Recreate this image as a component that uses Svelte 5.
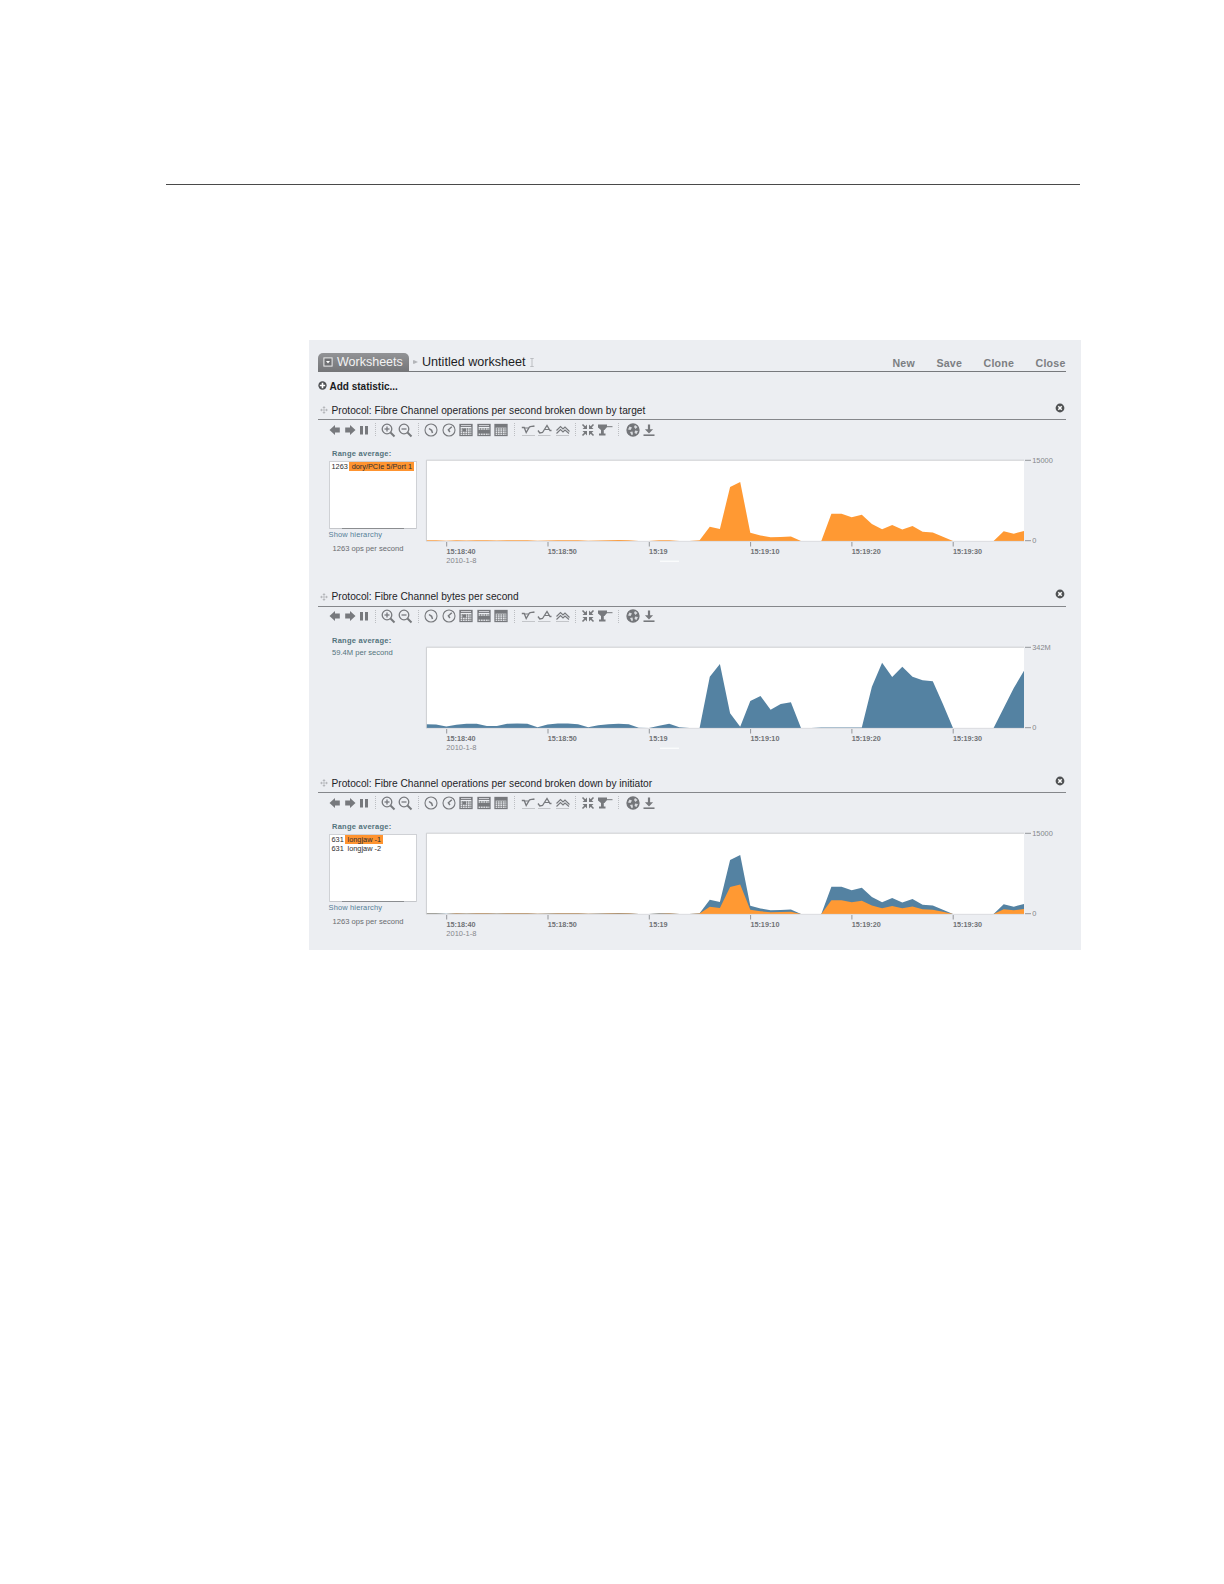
<script>
  const STEP = 10.135;
  const BASE = 81;

  const target = [
    0.7, 0.7, 0.2, 0.8, 0.6, 0.8, 0.8, 0.5, 0.8, 0.8, 0.8, 0.3, 0.6, 0.8, 0.8, 0.8, 0.3, 0.6, 0.8, 0.9,
    0.8, 0, 0, 0.7, 0.8, 0, 0, 0.8, 14.3, 12, 54, 59, 8.3, 5.5, 3.7, 4, 4.5, 0, 0, 0,
    27.3, 27.3, 23.7, 26.3, 17, 11.7, 16, 11.5, 15, 9.3, 8.5, 4.3, 0, 0, 0, 0, 0, 9.7, 7.3, 10
  ];
  const bytes = [
    3.7, 3.5, 1.6, 3.3, 4.2, 4.2, 2, 2, 4.2, 4.4, 4.2, 0.8, 3.5, 4.4, 4.4, 3.7, 0.8, 2.7, 3.7, 4.2,
    3.7, 0.3, 0, 2.3, 4.2, 0.8, 0, 0, 51.3, 64, 14.7, 1.3, 27, 32, 18.3, 24, 25.7, 0, 0, 0.4,
    0.5, 0.5, 0.5, 0.5, 41.3, 65.3, 51, 61.3, 51.3, 47.7, 46.7, 24, 0, 0, 0, 0, 0, 20, 40, 57.3
  ];
  const half = target.map((v) => v / 2);

  const blue = '#5482a2';
  const orange = '#ff9933';

  const stats = [
    {
      title: 'Protocol: Fibre Channel operations per second broken down by target',
      max: '15000',
      layers: [{ color: orange, data: target }],
      rows: [{ value: 1263, name: 'dory/PCIe 5/Port 1', selected: true }],
      total: '1263 ops per second',
      mark: true
    },
    {
      title: 'Protocol: Fibre Channel bytes per second',
      max: '342M',
      layers: [{ color: blue, data: bytes }],
      rows: null,
      total: '59.4M per second',
      mark: true
    },
    {
      title: 'Protocol: Fibre Channel operations per second broken down by initiator',
      max: '15000',
      layers: [{ color: blue, data: target }, { color: orange, data: half }],
      rows: [
        { value: 631, name: 'longjaw -1', selected: true },
        { value: 631, name: 'longjaw -2', selected: false }
      ],
      total: '1263 ops per second',
      mark: false
    }
  ];

  const ticks = ['15:18:40', '15:18:50', '15:19', '15:19:10', '15:19:20', '15:19:30'];
  const menu = ['New', 'Save', 'Clone', 'Close'];

  const groups = [
    { step: 14.4, gap: 8.4, icons: ['prev', 'next', 'pause'] },
    { step: 17, gap: 8.8, icons: ['zoomIn', 'zoomOut'] },
    { step: 17.45, gap: 9.1, icons: ['minute', 'hour', 'day', 'week', 'month'] },
    { step: 17.6, gap: 8.3, icons: ['min', 'max', 'lines'] },
    { step: 16.6, gap: 11.5, icons: ['drill', 'trophy'] },
    { step: 16, gap: 0, icons: ['sphere', 'download'] }
  ];

  function area(data) {
    const pts = data.map((v, i) => `${(i * STEP).toFixed(1)},${(BASE - v).toFixed(1)}`);
    return `0,${BASE} ${pts.join(' ')} 598,${BASE}`;
  }
</script>

{#snippet icon(name)}
  <svg class="icon" viewBox="0 0 14 14" width="14" height="14">
    {#if name === 'prev'}
      <path class="fill" d="M1.5 7 7 2v2.6h4.8v4.8H7V12z" />
    {:else if name === 'next'}
      <path class="fill" d="M12.5 7 7 2v2.6H2.2v4.8H7V12z" />
    {:else if name === 'pause'}
      <path class="fill" d="M3 3h3v8.4H3zM8 3h3v8.4H8z" />
    {:else if name === 'zoomIn' || name === 'zoomOut'}
      <circle cx="6" cy="6" r="4.8" />
      <path d="M3.5 6h5" />
      {#if name === 'zoomIn'}<path d="M6 3.5v5" />{/if}
      <path d="m9.5 9.5 4 4" stroke-width="2" />
    {:else if name === 'minute'}
      <circle cx="7" cy="7" r="6" stroke-width="1.1" />
      <path d="m5 5.5 2.6 1.8.9 2.7" stroke-width="1.5" />
    {:else if name === 'hour'}
      <circle cx="7" cy="7" r="6" stroke-width="1.1" />
      <path d="m9.8 3.8-3.4 3L7.9 9" stroke-width="1.5" />
    {:else if name === 'day' || name === 'week' || name === 'month'}
      <rect x="1" y="1.5" width="12" height="11" />
      <path class="fill" d="M1 1h12v3H1z" />
      <path class="thin" d="M1 6h12M1 8.2h12M1 10.4h12M3.5 5v7.5M6 5v7.5M8.5 5v7.5M11 5v7.5" />
      {#if name === 'day'}
        <path d="M2 2.6h10" stroke="#d5d7db" stroke-width="1" />
        <path class="fill" d="M4 5.5h3v3H4z" />
      {:else if name === 'week'}
        <path d="M2 2.6h10" stroke="#d5d7db" stroke-width="1" />
        <path class="fill" d="M1 7h12v3H1z" />
      {:else}
        <path class="fill" d="M1 1.5h12v3.2H1z" />
      {/if}
    {:else if name === 'min'}
      <path class="base" d="M1 12.5h13" />
      <path d="M.8 4.5h2.4l2 5L8.500 4c1-1.200 3-.2 5-1.200" />
      <path d="M3.200 5h4.600" stroke-width="1" />
    {:else if name === 'max'}
      <path class="base" d="M0 12.5h12.5" />
      <path d="M0 7.500 1.800 10l2.700-.5L9 2.500l3 5h1.500" />
      <path d="M7 6.500h4" stroke-width="1" />
    {:else if name === 'lines'}
      <path class="base" d="M0 12.5h13" />
      <path d="m.5 7.500 4-4L7 6l2-2 4.500 4.500M.5 10.500l4-4L7 9l2-2 4 3.500" stroke-width="1.100" />
    {:else if name === 'drill'}
      <path d="m1.500 1.500 3 3m8-3-3 3m-8 8 3-3m8 3-3-3" stroke-width="1.600" />
      <path class="fill" d="M6 1.500V6H1.500zM8 1.500V6h4.500zM6 12.500V8H1.500zM8 12.500V8h4.500z" />
    {:else if name === 'trophy'}
      <path class="fill" d="M0 1.500h9V4L6.500 7h-.7v3.500H7.500v2H1v-2h2V7L0 4.500z" />
      <path d="M8 3.700h6.500" stroke-width="1" />
    {:else if name === 'sphere'}
      <circle cx="7" cy="7" r="6" class="disc" />
      <path class="light" d="m3.500 3.500 2.500 1-1.500 2.500L2 6.500zM9 2l2.500 2-2 2L8 4zM9 7.500l3 .5-1.500 3-2-1zM4 9l2.500-.5.5 3-1.500.5z" />
    {:else if name === 'download'}
      <path class="fill" d="M5.900 1.500h2.200v4.800h3L7 10.500 2.900 6.300h3z" />
      <path d="M1.500 12.200h11" stroke-width="1.600" />
    {/if}
  </svg>
{/snippet}

<div class="page">
  <div class="rule"></div>

  <main class="panel">
    <header>
      <div class="tab">
        <svg viewBox="0 0 10 10" width="10" height="10">
          <rect x=".9" y=".9" width="8.2" height="8.2" fill="#6f7073" stroke="#eee" />
          <path d="M3 4h4L5 6.5z" fill="#fff" />
        </svg>
        <span>Worksheets</span>
      </div>
      <svg class="crumb" viewBox="0 0 5 6" width="5" height="6"><path d="M0 1.2h1.200L5 3 1.200 4.800H0z" fill="#b3b5b9" /></svg>
      <h1>Untitled worksheet</h1>
      <svg class="cursor" viewBox="0 0 4 9" width="4" height="9"><path d="M.3.5h3.400M.3 8.500h3.400M2 .5v8" stroke="#bcbec2" fill="none" /></svg>
      <nav>
        {#each menu as item}
          <span>{item}</span>
        {/each}
      </nav>
    </header>

    <div class="add">
      <svg viewBox="0 0 10 10" width="9" height="9">
        <circle cx="5" cy="5" r="4.6" fill="#4d4f52" />
        <path d="M5 2v6M2 5h6" stroke="#fff" stroke-width="1.8" />
      </svg>
      <span>Add statistic...</span>
    </div>

    {#each stats as stat}
      <section>
        <div class="title">
          <svg class="move" viewBox="0 0 8 8" width="8" height="8">
            <path d="M4 0 5.600 2H2.400zM4 8 2.400 6h3.200zM0 4l2-1.600v3.200zM8 4 6 5.600V2.400z" fill="#b5b7bb" />
            <path d="M4 2v4M2 4h4" stroke="#c0c2c6" />
          </svg>
          <h2>{stat.title}</h2>
          <svg class="remove" viewBox="0 0 10 10" width="10" height="10">
            <circle cx="5" cy="5" r="4.4" fill="#505254" />
            <path d="m3.300 3.300 3.400 3.400m0-3.400L3.300 6.700" stroke="#fff" stroke-width="1.5" />
          </svg>
        </div>

        <div class="toolbar">
          {#each groups as group}
            {#each group.icons as name}
              <span class="tool" style="width: {group.step}px">{@render icon(name)}</span>
            {/each}
            {#if group.gap}
              <span class="sep" style="width: {group.gap}px"></span>
            {/if}
          {/each}
        </div>

        <div class="body">
          <aside>
            <div class="range">Range average:</div>
            {#if stat.rows}
              <div class="list">
                {#each stat.rows as row}
                  <div class="row">
                    <span>{row.value}</span>
                    <span class="name" class:selected={row.selected}>{row.name}</span>
                  </div>
                {/each}
                <div class="scroll"></div>
              </div>
              <div class="hierarchy">Show hierarchy</div>
              <div class="total">{stat.total}</div>
            {:else}
              <div class="rate">{stat.total}</div>
            {/if}
          </aside>

          <svg class="chart" viewBox="0 -5 640 115" width="640" height="115">
            <rect x="0" y="0" width="598" height={BASE} fill="#fff" />
            {#each stat.layers as layer}
              <polygon points={area(layer.data)} fill={layer.color} />
            {/each}
            <path class="frame" d="M.4 81V.2H598" />
            <path class="floor" d="M0 81.3h598" />
            <path class="tick" d="M599 .3h6M599 80.700h6" />
            <text class="scale" x="606.200" y="2.500">{stat.max}</text>
            <text class="scale" x="606.200" y="83.200">0</text>
            {#each ticks as label, i}
              <path class="tick" d="M{20.7 + i * 101.3} 82v4.5" />
              <text class="time" x={20.5 + i * 101.3} y="94.400">{label}</text>
            {/each}
            <text class="date" x="20.300" y="103.200">2010-1-8</text>
            {#if stat.mark}
              <path d="M234 101.300h19" stroke="#fafbfc" stroke-width="1.4" />
            {/if}
          </svg>
        </div>
      </section>
    {/each}
  </main>
</div>

<style>
  :global(body) { background: #fff; }

  .page {
    width: 1224px; height: 1584px; box-sizing: border-box;
    padding-top: 184px;
    font-family: "Liberation Sans", Arial, sans-serif;
  }
  .rule { height: 1px; width: 914px; margin-left: 166px; background: #4a4a4a; }

  .panel {
    width: 771.5px; height: 610px; box-sizing: border-box;
    margin: 155px 0 0 309px; padding: 13px 15px 0 9px;
    background: #eceef2; overflow: hidden;
  }
  svg { display: block; flex: none; overflow: visible; }

  header {
    display: flex; align-items: center;
    height: 19px; box-sizing: border-box;
    border-bottom: 1px solid #77797d;
  }
  .tab {
    display: flex; align-items: center; gap: 4px;
    width: 91px; height: 19px; box-sizing: border-box; padding-left: 5px;
    border-radius: 5px 5px 0 0;
    background: linear-gradient(#929396, #747578);
    color: #f2f2f2; font-size: 12.5px; line-height: 18px; white-space: nowrap;
  }
  .crumb { margin-left: 3.5px; }
  h1 { margin: 0 0 0 4.5px; font-size: 12.6px; font-weight: 400; line-height: 18px; color: #1d1d1f; white-space: nowrap; }
  .cursor { margin-left: 4px; }
  nav {
    display: flex; gap: 21.5px; margin-left: auto;
    font-size: 10.6px; font-weight: 700; letter-spacing: 0.22px; color: #7c7e82;
    padding-top: 1px;
  }

  .add {
    display: flex; align-items: center; gap: 2.5px;
    height: 28px; box-sizing: border-box; padding-top: 1px;
    font-size: 10px; font-weight: 700; color: #1b1b1d;
  }
  .add svg { margin-top: -2px; }

  section { height: 186.5px; }
  .title {
    display: flex; align-items: center;
    height: 20px; box-sizing: border-box; padding: 2px 1px 0 2px;
    border-bottom: 1px solid #85878b;
  }
  h2 { margin: 0 0 0 3.5px; font-size: 10.18px; font-weight: 400; line-height: 16px; color: #1e2427; white-space: nowrap; }
  .move { margin-top: -1px; }
  .remove { margin: -6px 0 0 auto; }

  .toolbar { display: flex; align-items: center; height: 19px; padding-left: 10.2px; }
  .tool { display: flex; justify-content: center; flex: none; }
  .icon { fill: none; stroke: #77797d; stroke-width: 1.3; }
  .icon .fill { fill: #77797d; stroke: none; }
  .icon .disc { fill: #737579; stroke: #737579; }
  .icon .light { fill: #d9dbdf; stroke: none; }
  .icon .thin { stroke-width: 0.7; }
  .icon .base { stroke: #c3c5c9; stroke-width: 1; }
  .sep { flex: none; height: 13px; }
  .sep::before {
    content: ""; display: block; width: 0; height: 13px; margin: 0 auto;
    border-left: 1px dotted #bcbec2;
  }

  .body { display: flex; align-items: flex-start; }
  aside { width: 108.3px; flex: none; padding-top: 10px; font-size: 7.6px; line-height: 9px; color: #686b6f; white-space: nowrap; }
  .range { padding-left: 14px; height: 12px; font-size: 7.5px; font-weight: 700; letter-spacing: 0.26px; color: #53737c; }
  .list {
    display: flex; flex-direction: column;
    width: 88px; height: 68px; box-sizing: border-box; margin-left: 10.5px;
    border: 1px solid #cfd1d5; border-bottom: 0;
    background: #fff; color: #2e2e30; font-size: 7.35px;
  }
  .row { display: flex; gap: 1.5px; height: 9.2px; padding-left: 2px; }
  .name { height: 9px; padding: 0 2.3px; }
  .name.selected { background: #ff9430; }
  .scroll { height: 1px; margin: auto 0 0; border: solid #c4c6ca; border-width: 0 12px; background: #8b8d90; }
  .hierarchy { margin: 1px 0 0 10.5px; font-size: 7.5px; letter-spacing: 0.14px; color: #557f98; }
  .total { margin: 5px 0 0 14.5px; }
  .rate { padding: 0 0 0 14px; color: #53737c; }

  .chart { margin-top: 16.2px; }
  .frame { fill: none; stroke: #cbcdd0; stroke-width: 1; }
  .floor { stroke: #cfcfd2; stroke-width: 0.6; }
  .tick { stroke: #94969a; stroke-width: 1; }
  text { font-size: 7.4px; fill: #85878b; }
  .time { font-size: 7.25px; font-weight: 700; fill: #707276; }
  .date { font-size: 7.5px; }
</style>
